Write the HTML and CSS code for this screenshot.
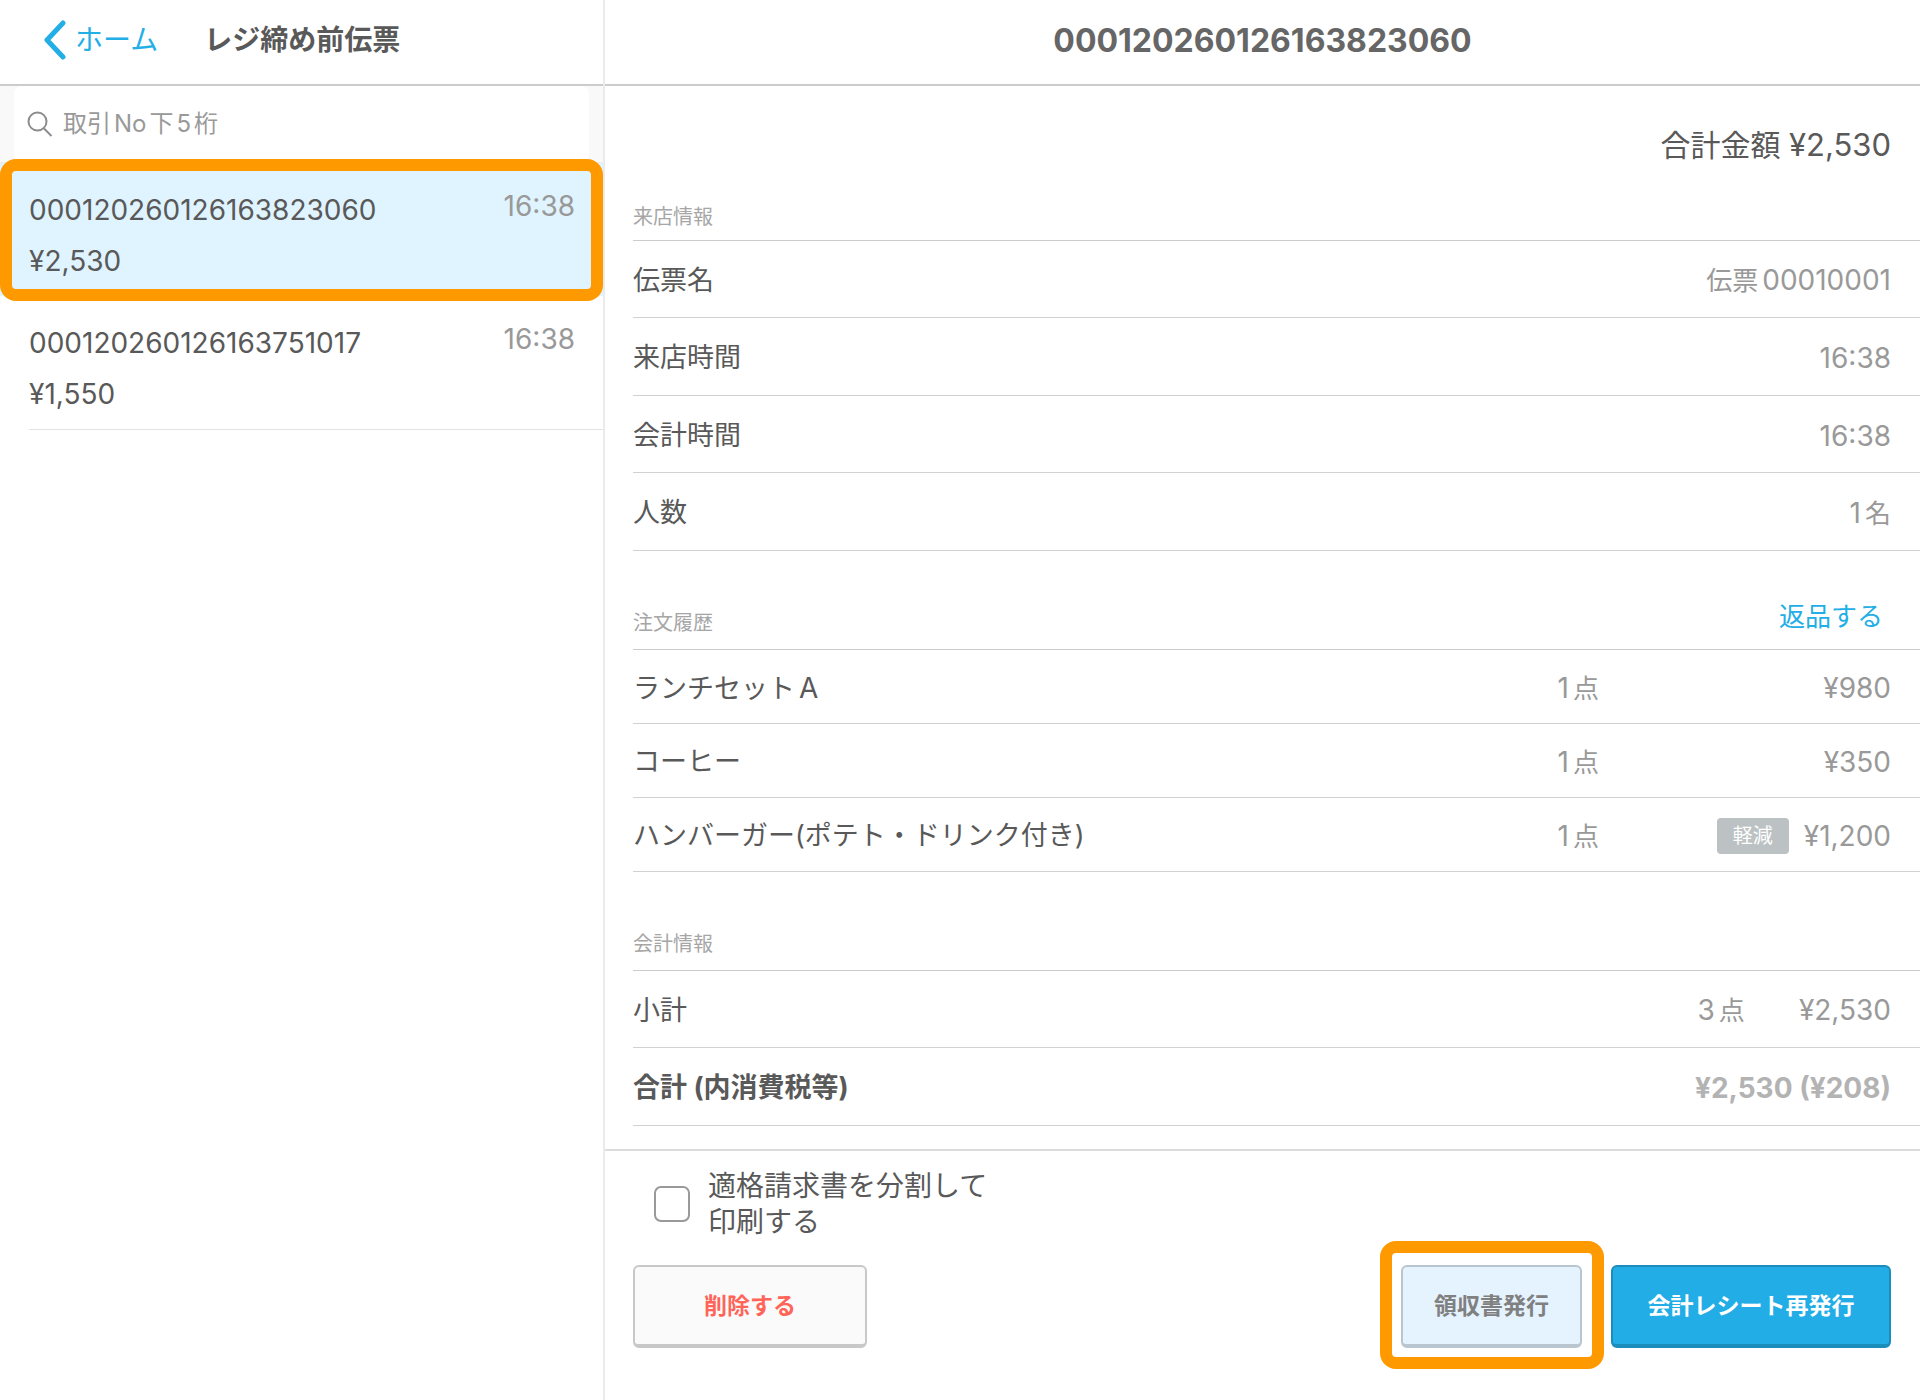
FILE: index.html
```html
<!DOCTYPE html>
<html lang="ja">
<head>
<meta charset="utf-8">
<meta name="viewport" content="width=device-width, initial-scale=1">
<title>レジ締め前伝票</title>
<link rel="stylesheet" href="styles.css">
</head>
<body>
<div class="app">
  <aside class="sidebar">
    <header class="bar">
      <a class="back" href="#home">
        <svg class="back-icon" viewBox="0 0 24 40" aria-hidden="true"><path d="M20 3 4 20 20 37"/></svg>
        <span>ホーム</span>
      </a>
      <h1 class="bar-title">レジ締め前伝票</h1>
    </header>
    <div class="search">
      <label class="search-box">
        <svg class="search-icon" viewBox="0 0 26 26" aria-hidden="true"><circle cx="10.5" cy="10.5" r="9"/><path d="M17 17.500 24.500 25"/></svg>
        <input class="search-input" type="search" placeholder="取引No下5桁" aria-label="取引No下5桁">
      </label>
    </div>
    <ul class="slips">
      <li>
        <a class="slip slip-selected" href="#slip-1" aria-current="true">
          <span class="slip-no">000120260126163823060</span>
          <span class="slip-time">16:38</span>
          <span class="slip-price">¥2,530</span>
        </a>
      </li>
      <li>
        <a class="slip" href="#slip-2">
          <span class="slip-no">000120260126163751017</span>
          <span class="slip-time">16:38</span>
          <span class="slip-price">¥1,550</span>
        </a>
      </li>
    </ul>
  </aside>

  <main class="detail">
    <header class="bar bar-center">
      <h2 class="slip-title">000120260126163823060</h2>
    </header>
    <div class="content">
      <p class="total">合計金額 <span class="total-num">¥2,530</span></p>

      <section>
        <div class="head head-first"><h3 class="head-title">来店情報</h3></div>
        <dl class="rows">
          <div class="row"><dt>伝票名</dt><dd>伝票<span class="num gap">00010001</span></dd></div>
          <div class="row"><dt>来店時間</dt><dd class="num">16:38</dd></div>
          <div class="row"><dt>会計時間</dt><dd class="num">16:38</dd></div>
          <div class="row"><dt>人数</dt><dd><span class="num">1</span><span class="gap">名</span></dd></div>
        </dl>
      </section>

      <section>
        <div class="head">
          <h3 class="head-title">注文履歴</h3>
          <button class="refund" type="button">返品する</button>
        </div>
        <table class="items">
          <tbody>
            <tr><th scope="row">ランチセット<span class="num gap">A</span></th><td><span class="num">1</span><span class="gap">点</span></td><td class="price num">¥980</td></tr>
            <tr><th scope="row">コーヒー</th><td><span class="num">1</span><span class="gap">点</span></td><td class="price num">¥350</td></tr>
            <tr><th scope="row">ハンバーガー(ポテト・ドリンク付き)</th><td><span class="num">1</span><span class="gap">点</span></td><td class="price num"><span class="badge">軽減</span>¥1,200</td></tr>
          </tbody>
        </table>
      </section>

      <section>
        <div class="head"><h3 class="head-title">会計情報</h3></div>
        <dl class="rows">
          <div class="row"><dt>小計</dt><dd class="subtotal"><span><span class="num">3</span><span class="gap">点</span></span><span class="num">¥2,530</span></dd></div>
          <div class="row row-strong"><dt>合計 (内消費税等)</dt><dd class="num">¥2,530 (¥208)</dd></div>
        </dl>
      </section>
    </div>

    <footer class="footer">
      <label class="split">
        <input class="check" type="checkbox">
        <span>適格請求書を分割して<br>印刷する</span>
      </label>
      <div class="actions">
        <button class="btn btn-delete" type="button">削除する</button>
        <button class="btn btn-receipt" type="button">領収書発行</button>
        <button class="btn btn-primary" type="button">会計レシート再発行</button>
      </div>
    </footer>
  </main>
</div>
</body>
</html>
```
FILE: styles.css
```css
* {
  box-sizing: border-box;
}

body {
  margin: 0;
  background: #fff;
  color: #595959;
  font-family: Inter, "Noto Sans CJK JP", sans-serif;
  font-size: 27px;
  line-height: 36px;
}

h1, h2, h3, p, ul, dl, dd {
  margin: 0;
  padding: 0;
}

ul {
  list-style: none;
}

a {
  color: inherit;
  text-decoration: none;
}

button, input {
  font: inherit;
}

/* Space between Japanese and Latin characters */
.gap {
  margin-left: 4px;
}

.app {
  display: grid;
  grid-template-columns: minmax(320px, 605px) minmax(0, 1fr);
  min-height: 100vh;
}

.bar {
  display: flex;
  align-items: center;
  height: 86px;
  padding-bottom: 4px;
  border-bottom: 2px solid #ccc;
}

.bar-center {
  justify-content: center;
  padding-bottom: 2px;
}

/* Sidebar */
.sidebar {
  border-right: 2px solid #ebebeb;
}

.back {
  display: flex;
  align-items: center;
  gap: 8px;
  margin-left: 43px;
  color: #23aee6;
  font-size: 28px;
}

.back-icon {
  width: 24px;
  height: 40px;
  fill: none;
  stroke: currentColor;
  stroke-width: 5;
  stroke-linecap: round;
  stroke-linejoin: round;
}

.bar-title {
  margin-left: 46px;
  font-size: 28px;
  font-weight: 700;
}

.search {
  padding: 0 14px;
  background: #f9f9f9;
  border-bottom: 1px solid #ebebeb;
}

.search-box {
  display: flex;
  align-items: center;
  gap: 10px;
  height: 76px;
  padding: 0 13px;
  background: #fff;
  border-radius: 8px;
}

.search-icon {
  flex: none;
  width: 26px;
  height: 26px;
  fill: none;
  stroke: #8c8c8c;
  stroke-width: 2;
}

.search-input {
  flex: 1;
  min-width: 0;
  padding: 0;
  border: 0;
  outline: 0;
  background: none;
  appearance: none;
  font-size: 24px;
  text-autospace: normal;
}

.search-input::placeholder {
  color: #999;
}

.slip {
  position: relative;
  display: grid;
  grid-template-columns: 1fr auto;
  align-content: start;
  row-gap: 15px;
  height: 134px;
  margin-left: 29px;
  padding: 29px 28px 0 0;
  border-bottom: 1px solid #e3e3e3;
  font-size: 28px;
}

.slip-selected {
  height: 133px;
  margin-left: 0;
  padding-left: 29px;
  border-bottom: 0;
  background: #e0f4ff;
}

.slip-selected::after {
  content: "";
  position: absolute;
  inset: -4px 0 -5px 0;
  border: 12px solid #ff9900;
  border-radius: 16px;
}

.slip-time {
  line-height: 28px;
  color: #999;
}

/* Detail */
.detail {
  display: flex;
  flex-direction: column;
}

.slip-title {
  color: #666;
  font-size: 32px;
  font-weight: 700;
}

.content {
  flex: 1;
  padding: 40px 0 23px 28px;
}

.total {
  height: 40px;
  padding-right: 29px;
  font-size: 30px;
  line-height: 38px;
  text-align: right;
}

.total-num {
  font-size: 31px;
}

.head {
  display: flex;
  justify-content: space-between;
  align-items: flex-end;
  height: 99px;
  padding: 0 37px 11px 0;
  border-bottom: 1px solid #ccc;
}

.head-first {
  height: 75px;
  padding-bottom: 8px;
}

.head-title {
  color: #a6a6a6;
  font-size: 20px;
  font-weight: 400;
  line-height: 30px;
}

.refund {
  padding: 0;
  border: 0;
  background: none;
  color: #23aee6;
  font-size: 26px;
  line-height: 42px;
}

.row {
  display: flex;
  justify-content: space-between;
  align-items: center;
  height: 78px;
  padding: 3px 29px 0 0;
  border-bottom: 1px solid #d2d2d2;
}

.row:nth-child(odd) {
  height: 77px;
}

.row dd {
  color: #999;
  font-size: 26px;
}

.row .num,
.items .num {
  font-size: 28px;
}

.subtotal {
  display: flex;
  gap: 54px;
}

.row-strong {
  font-weight: 700;
}

.row-strong dd {
  color: #b3b3b3;
}

.items {
  width: 100%;
  border-collapse: separate;
  border-spacing: 0;
}

.items th,
.items td {
  height: 74px;
  padding: 3px 0 0;
  border-bottom: 1px solid #d2d2d2;
  text-align: right;
}

.items th {
  font-weight: 400;
  text-align: left;
}

.items td {
  color: #999;
  font-size: 26px;
}

.items .price {
  width: 321px;
  padding-right: 29px;
}

.badge {
  display: inline-block;
  width: 72px;
  height: 36px;
  margin-right: 15px;
  border-radius: 4px;
  background: #bcc2c4;
  color: #fff;
  font-size: 20px;
  text-align: center;
  vertical-align: top;
}

/* Footer */
.footer {
  padding: 17px 29px 52px 28px;
  border-top: 2px solid #dcdcdc;
}

.split {
  display: flex;
  align-items: center;
  gap: 18px;
  width: fit-content;
  margin-left: 21px;
  font-size: 28px;
}

.check {
  appearance: none;
  width: 36px;
  height: 36px;
  margin: 0;
  border: 2px solid #999;
  border-radius: 7px;
  background: #fff;
}

.actions {
  display: flex;
  gap: 29px;
  margin-top: 25px;
}

.btn {
  position: relative;
  height: 83px;
  padding: 0;
  border: 2px solid #c8c8c8;
  border-bottom-width: 4px;
  border-radius: 6px;
  font-size: 23px;
  font-weight: 700;
}

.btn-delete {
  width: 234px;
  margin-right: auto;
  background: #fafafa;
  color: #ff6459;
}

.btn-receipt {
  width: 181px;
  border-color: #b9c6cf;
  background: #e5f3ff;
  color: #808080;
}

.btn-receipt::after {
  content: "";
  position: absolute;
  inset: -26px -24px -25px -23px;
  border: 12px solid #ff9900;
  border-radius: 16px;
}

.btn-primary {
  width: 280px;
  border-color: #1b8dbb;
  background: #22ade6;
  color: #fff;
}
```
